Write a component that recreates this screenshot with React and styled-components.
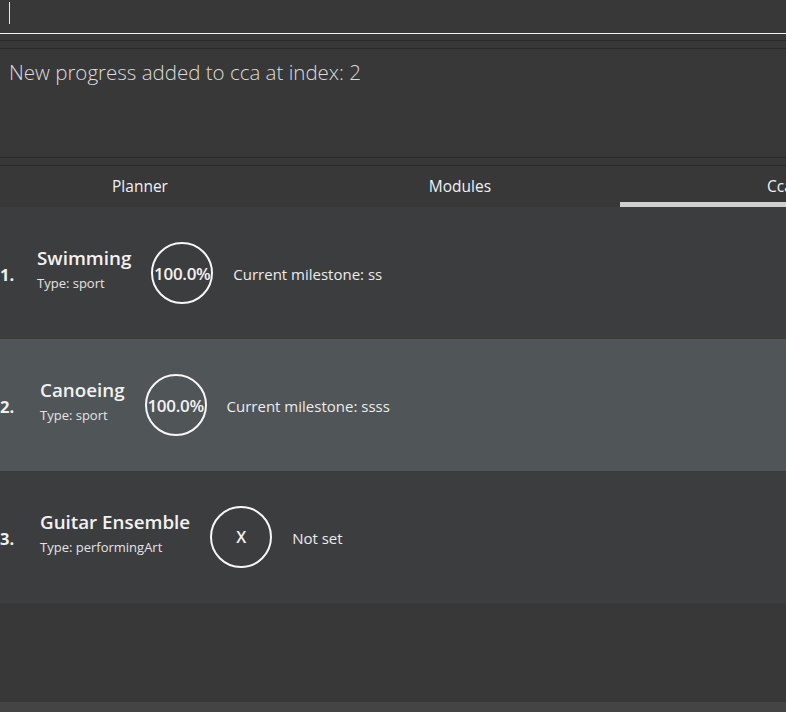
import React from 'react'
import styled, { createGlobalStyle } from 'styled-components'

const Global = createGlobalStyle`
  html, body {
    margin: 0;
    padding: 0;
    background: #383838;
  }
  body {
    font-family: "Open Sans", "Noto Sans", sans-serif;
    overflow: hidden;
  }
`

const Window = styled.div`
  width: 786px;
  height: 712px;
  display: flex;
  flex-direction: column;
  background: #383838;
  overflow: hidden;
`

const CommandBox = styled.div`
  height: 33px;
  flex: none;
  border-bottom: 1px solid #f2f2f2;
  display: flex;
  align-items: flex-start;
  padding-left: 9px;
`

const Caret = styled.div`
  width: 1px;
  height: 22px;
  margin-top: 2px;
  background: #e8e8e8;
`

const Divider = styled.div`
  flex: none;
  height: 7px;
  margin-top: ${p => p.$top || 0}px;
  border-top: 1px solid #2a2a2a;
  border-bottom: 1px solid #2a2a2a;
`

const ResultBox = styled.div`
  flex: none;
  height: 108px;
  box-sizing: border-box;
  padding: 10px 9px;
  color: #dcdcdc;
  font-size: 20.5px;
  font-weight: 300;
  line-height: 27px;
`

const TabBar = styled.div`
  flex: none;
  height: 41px;
  display: flex;
  margin-left: -20px;
`

const Tab = styled.div`
  width: 320px;
  flex: none;
  box-sizing: border-box;
  display: flex;
  justify-content: center;
  align-items: center;
  padding-top: 3px;
  color: #eef2f6;
  font-size: 15.5px;
  border-bottom: 5px solid ${p => (p.$active ? '#d0d0d0' : 'transparent')};
`

const List = styled.div`
  flex: none;
  display: flex;
  flex-direction: column;
`

const Row = styled.div`
  height: 132px;
  display: flex;
  align-items: center;
  background: ${p => (p.$selected ? '#505557' : '#3c3d3f')};
  color: #f0f0f0;
`

const Index = styled.div`
  width: ${p => p.$w}px;
  flex: none;
  font-weight: 700;
  font-size: 16.5px;
  padding-top: 3px;
`

const Info = styled.div`
  display: flex;
  flex-direction: column;
  margin-right: 20px;
  padding-bottom: 7px;
`

const Name = styled.div`
  font-weight: 600;
  font-size: 18.8px;
  line-height: 23px;
  color: #f2f2f2;
`

const Type = styled.div`
  font-size: 13px;
  line-height: 18px;
  color: #e4e4e4;
  margin-top: 4px;
`

const Ring = styled.div`
  width: 58px;
  height: 58px;
  flex: none;
  border: 2px solid #f7f7f7;
  border-radius: 50%;
  display: flex;
  align-items: center;
  justify-content: center;
  font-weight: 600;
  font-size: ${p => (p.$small ? 16 : 17)}px;
  letter-spacing: -0.3px;
  white-space: nowrap;
  color: #f2f2f2;
`

const Milestone = styled.div`
  margin-left: 20px;
  font-size: 15px;
  color: #ececec;
  padding-top: 1px;
`

const Filler = styled.div`
  flex: 1;
  background: #383838;
`

const Footer = styled.div`
  flex: none;
  height: 10px;
  background: #444444;
`

const ccas = [
  { name: 'Swimming', type: 'sport', ring: '100.0%', note: 'Current milestone: ss', w: 37 },
  { name: 'Canoeing', type: 'sport', ring: '100.0%', note: 'Current milestone: ssss', w: 40, selected: true },
  { name: 'Guitar Ensemble', type: 'performingArt', ring: 'X', note: 'Not set', w: 40 },
]

export default function App() {
  return (
    <Window>
      <Global />
      <CommandBox>
        <Caret />
      </CommandBox>
      <Divider $top={6} />
      <ResultBox>New progress added to cca at index: 2</ResultBox>
      <Divider />
      <TabBar>
        <Tab>Planner</Tab>
        <Tab>Modules</Tab>
        <Tab $active>Cca</Tab>
      </TabBar>
      <List>
        {ccas.map((c, i) => (
          <Row key={c.name} $selected={c.selected}>
            <Index $w={c.w}>{i + 1}.</Index>
            <Info>
              <Name>{c.name}</Name>
              <Type>Type: {c.type}</Type>
            </Info>
            <Ring $small={c.ring === 'X'}>{c.ring}</Ring>
            <Milestone>{c.note}</Milestone>
          </Row>
        ))}
      </List>
      <Filler />
      <Footer />
    </Window>
  )
}
